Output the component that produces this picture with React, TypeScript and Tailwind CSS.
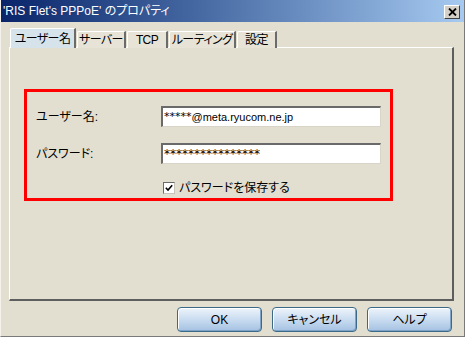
import React from "react";

const jp = "font-['Liberation_Sans','Noto_Sans_CJK_JP',sans-serif] [font-feature-settings:'palt']";

function Tab({ label, selected, w }: { label: string; selected?: boolean; w: string }) {
  if (selected) {
    return (
      <div
        className={`${w} h-[20px] bg-[#d6e3eb] border-l border-t border-white border-r-2 border-r-[#6b6b6b] rounded-tl-[2px] flex items-center justify-center whitespace-nowrap tracking-[-0.6px] text-[12px] text-black relative z-10`}
      >
        {label}
      </div>
    );
  }
  return (
    <div
      className={`${w} h-[17px] bg-[#e7e3d6] border-l border-t border-white border-r-2 border-r-[#6b6b6b] rounded-tl-[2px] flex items-center justify-center whitespace-nowrap tracking-[-0.6px] text-[12px] text-black`}
    >
      {label}
    </div>
  );
}

function Btn({ label }: { label: string }) {
  return (
    <div className="w-[85px] h-[25px] rounded-[4px] border border-[#3a6a88] bg-gradient-to-b from-[#eef4fb] via-[#c9dcf0] to-[#a5c2e2] shadow-[inset_1px_1px_0_#ffffff,inset_-1px_-1px_0_#7fa3c6] flex items-center justify-center text-[12px] text-black whitespace-nowrap">
      {label}
    </div>
  );
}

export default function App() {
  return (
    <div className={`w-[465px] h-[337px] bg-[#e2ded0] flex flex-col border-l border-l-[#f4f2ea] border-r border-b border-[#7a7a7a] ${jp}`}>
      <div className="h-[22px] flex items-center justify-between pl-[2px] pr-[4px] bg-gradient-to-r from-[#0a246a] to-[#a6caf0]">
        <span className="text-white text-[12px] leading-none whitespace-nowrap">'RIS Flet's PPPoE' のプロパティ</span>
        <div className="w-[16px] h-[14px] mt-[2px] bg-[#d4d0c8] border border-t-white border-l-white border-r-[#404040] border-b-[#404040] flex items-center justify-center">
          <svg width="9" height="8" viewBox="0 0 9 8">
            <path d="M1 0.5 L8 7.5 M8 0.5 L1 7.5" stroke="#000" strokeWidth="1.8" />
          </svg>
        </div>
      </div>
      <div className="flex-1 flex flex-col pl-[8px] pr-[10px] pt-[6px]">
        <div className="flex items-end h-[20px] pl-[1px] gap-[1px] -mb-[1px] relative z-10">
          <Tab label="ユーザー名" selected w="w-[66px]" />
          <Tab label="サーバー" w="w-[49px]" />
          <Tab label="TCP" w="w-[41px]" />
          <Tab label="ルーティング" w="w-[67px]" />
          <Tab label="設定" w="w-[40px]" />
        </div>
        <div className="h-[254px] border-l border-t border-white border-r-2 border-b-2 border-r-[#5e5e5e] border-b-[#5e5e5e] pl-[14px] pt-[41px]">
          <div className="w-[369px] h-[112px] border-[3px] border-[#ff0000] pl-[9px] pt-[14px] flex flex-col">
            <div className="flex items-center h-[21px]">
              <span className="w-[125px] text-[12px] text-black whitespace-nowrap">ユーザー名:</span>
              <div className="w-[220px] h-[21px] bg-white border-t-2 border-l-2 border-t-[#6a6a6a] border-l-[#6a6a6a] border-b border-r border-b-[#d8d4c8] border-r-[#d8d4c8] flex items-center pl-[1px] text-[11px] text-black whitespace-nowrap">
                <span className="font-['DejaVu_Sans',sans-serif] text-[11px]">*****</span>
                <span className="font-['Liberation_Sans',sans-serif]">@meta.ryucom.ne.jp</span>
              </div>
            </div>
            <div className="flex items-center h-[21px] mt-[16px]">
              <span className="w-[125px] text-[12px] text-black whitespace-nowrap">パスワード:</span>
              <div className="w-[220px] h-[21px] bg-white border-t-2 border-l-2 border-t-[#6a6a6a] border-l-[#6a6a6a] border-b border-r border-b-[#d8d4c8] border-r-[#d8d4c8] flex items-center pl-[1px] text-black">
                <span className="font-['DejaVu_Sans',sans-serif] text-[12px]">****************</span>
              </div>
            </div>
            <div className="flex items-center h-[13px] mt-[17px] pl-[127px]">
              <div className="w-[12px] h-[12px] bg-white border border-t-[#6a6a6a] border-l-[#6a6a6a] border-b-[#c8c4b8] border-r-[#c8c4b8] flex items-center justify-center">
                <svg width="8" height="8" viewBox="0 0 8 8">
                  <path d="M0.8 3.8 L3 6 L7.2 1.2" stroke="#000" strokeWidth="1.6" fill="none" />
                </svg>
              </div>
              <span className="ml-[4px] text-[12px] text-black whitespace-nowrap">パスワードを保存する</span>
            </div>
          </div>
        </div>
        <div className="flex justify-end gap-[10px] mt-[6px] pr-[2px]">
          <Btn label="OK" />
          <Btn label="キャンセル" />
          <Btn label="ヘルプ" />
        </div>
      </div>
    </div>
  );
}
